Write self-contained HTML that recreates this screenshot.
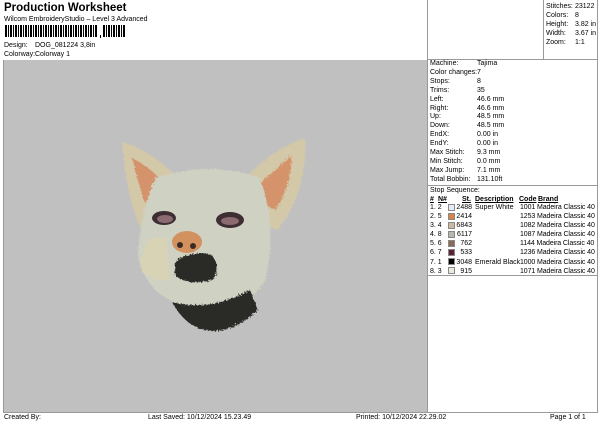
<!DOCTYPE html>
<html><head><meta charset="utf-8"><style>
*{margin:0;padding:0;box-sizing:border-box}
body{width:600px;height:424px;background:#fff;font-family:"Liberation Sans",Arial,sans-serif;font-size:7px;color:#000;position:relative;overflow:hidden}
.a{position:absolute;white-space:nowrap;line-height:9px}
.l{position:absolute;background:#999}
.u{text-decoration:underline;font-weight:bold}
.sw{position:absolute;width:7px;height:7px;border:1px solid #888}
</style></head><body>
<div class="a" style="left:4px;top:1px;font-size:11.5px;font-weight:bold;line-height:14px">Production Worksheet</div>
<div class="a" style="left:4px;top:15px">Wilcom EmbroideryStudio – Level 3 Advanced</div>
<svg style="position:absolute;left:5px;top:25px" width="125" height="13">
<g fill="#000">
<rect x="0" y="0" width="2" height="12"/><rect x="3" y="0" width="1" height="12"/><rect x="5" y="0" width="2" height="12"/><rect x="8" y="0" width="1" height="12"/><rect x="10" y="0" width="2" height="12"/><rect x="13" y="0" width="1" height="12"/><rect x="15" y="0" width="2" height="12"/><rect x="18" y="0" width="1" height="12"/><rect x="20" y="0" width="2" height="12"/><rect x="23" y="0" width="1" height="12"/><rect x="25" y="0" width="2" height="12"/><rect x="28" y="0" width="1" height="12"/><rect x="30" y="0" width="2" height="12"/><rect x="33" y="0" width="1" height="12"/><rect x="35" y="0" width="2" height="12"/><rect x="38" y="0" width="1" height="12"/><rect x="40" y="0" width="2" height="12"/><rect x="43" y="0" width="1" height="12"/><rect x="45" y="0" width="2" height="12"/><rect x="48" y="0" width="1" height="12"/><rect x="50" y="0" width="2" height="12"/><rect x="53" y="0" width="1" height="12"/><rect x="55" y="0" width="2" height="12"/><rect x="58" y="0" width="1" height="12"/><rect x="60" y="0" width="2" height="12"/><rect x="63" y="0" width="1" height="12"/><rect x="65" y="0" width="2" height="12"/><rect x="68" y="0" width="1" height="12"/><rect x="70" y="0" width="2" height="12"/><rect x="73" y="0" width="1" height="12"/><rect x="75" y="0" width="2" height="12"/><rect x="78" y="0" width="1" height="12"/><rect x="80" y="0" width="2" height="12"/><rect x="83" y="0" width="1" height="12"/><rect x="85" y="0" width="2" height="12"/><rect x="88" y="0" width="1" height="12"/><rect x="90" y="0" width="2" height="12"/>
<rect x="95" y="10" width="1" height="3"/>
<rect x="98" y="0" width="2" height="12"/><rect x="101" y="0" width="1" height="12"/><rect x="103" y="0" width="2" height="12"/><rect x="106" y="0" width="1" height="12"/><rect x="108" y="0" width="2" height="12"/><rect x="111" y="0" width="1" height="12"/><rect x="113" y="0" width="2" height="12"/><rect x="116" y="0" width="1" height="12"/><rect x="118" y="0" width="2" height="12"/>
</g></svg>
<div class="a" style="left:4px;top:41px">Design:</div><div class="a" style="left:35px;top:41px">DOG_081224 3,8in</div>
<div class="a" style="left:4px;top:50px">Colorway:</div><div class="a" style="left:35px;top:50px">Colorway 1</div>

<div style="position:absolute;left:3px;top:60px;width:424px;height:352px;background:#c0c0c0;border-left:1px solid #999"></div>
<svg style="position:absolute;left:100px;top:130px" width="220" height="210" viewBox="0 0 220 210">
<defs><filter id="f"><feTurbulence type="fractalNoise" baseFrequency="0.6" numOctaves="2" result="n"/><feDisplacementMap in="SourceGraphic" in2="n" scale="5"/></filter></defs>
<g filter="url(#f)">
<path d="M22 12 Q50 20 75 45 L80 80 L45 105 Q28 80 22 12 Z" fill="#d3c9a8"/>
<path d="M32 28 Q55 40 64 55 L58 78 L44 72 Z" fill="#d4936a"/>
<path d="M205 8 Q208 60 178 100 L140 85 L148 45 Q175 18 205 8 Z" fill="#d3c9a8"/>
<path d="M192 25 Q190 60 175 80 L160 72 L158 55 Z" fill="#d4936a"/>
<path d="M55 48 Q110 30 160 48 Q178 100 165 150 Q150 178 112 180 Q75 178 55 160 Q38 140 38 120 Q42 80 55 48 Z" fill="#cfd1c3"/>
<path d="M50 108 Q38 125 42 142 Q55 152 70 150 L66 108 Z" fill="#d9d3b6"/>
<path d="M72 172 Q110 182 150 160 L158 180 Q130 205 105 200 Q85 196 72 172 Z" fill="#2b2a28"/>
<path d="M75 132 Q90 120 112 125 Q122 140 112 150 Q90 156 75 146 Z" fill="#2c2a28"/>
</g>
<ellipse cx="64" cy="88" rx="12" ry="7" fill="#3e2e33"/>
<ellipse cx="65" cy="89" rx="8" ry="4" fill="#8b6a70"/>
<ellipse cx="130" cy="90" rx="14" ry="8" fill="#3e2e33"/>
<ellipse cx="130" cy="91" rx="9" ry="4" fill="#8b6a70"/>
<ellipse cx="87" cy="112" rx="15" ry="11" fill="#d2915f"/>
<circle cx="80" cy="115" r="3" fill="#3a2a25"/><circle cx="93" cy="116" r="3" fill="#3a2a25"/>
</svg>

<div class="l" style="left:427px;top:0;width:1px;height:412px"></div>
<div class="l" style="left:597px;top:0;width:1px;height:412px"></div>
<div class="l" style="left:543px;top:0;width:1px;height:59px"></div>
<div class="l" style="left:427px;top:59px;width:171px;height:1px"></div>
<div class="l" style="left:427px;top:185px;width:171px;height:1px"></div>
<div class="l" style="left:427px;top:275px;width:171px;height:1px"></div>

<div class="a" style="left:546px;top:2px">Stitches:<br>Colors:<br>Height:<br>Width:<br>Zoom:</div>
<div class="a" style="left:575px;top:2px">23122<br>8<br>3.82 in<br>3.67 in<br>1:1</div>

<div class="a" style="left:430px;top:60px;line-height:8.9px">Machine:<br>Color changes:<br>Stops:<br>Trims:<br>Left:<br>Right:<br>Up:<br>Down:<br>EndX:<br>EndY:<br>Max Stitch:<br>Min Stitch:<br>Max Jump:<br>Total Bobbin:</div>
<div class="a" style="left:477px;top:60px;line-height:8.9px">Tajima<br>7<br>8<br>35<br>46.6 mm<br>46.6 mm<br>48.5 mm<br>48.5 mm<br>0.00 in<br>0.00 in<br>9.3 mm<br>0.0 mm<br>7.1 mm<br>131.10ft</div>

<div class="a" style="left:430px;top:186px">Stop Sequence:</div>
<div class="a u" style="left:430px;top:195px">#</div>
<div class="a u" style="left:438px;top:195px">N#</div>
<div class="a u" style="left:462px;top:195px">St.</div>
<div class="a u" style="left:475px;top:195px">Description</div>
<div class="a u" style="left:519px;top:195px">Code</div>
<div class="a u" style="left:538px;top:195px">Brand</div>

<div class="a" style="left:430px;top:203px;line-height:9.1px">1. 2<br>2. 5<br>3. 4<br>4. 8<br>5. 6<br>6. 7<br>7. 1<br>8. 3</div>
<div class="sw" style="left:448px;top:204px;background:#e6ecf4"></div>
<div class="sw" style="left:448px;top:213px;background:#d8834a"></div>
<div class="sw" style="left:448px;top:222px;background:#cdb9a0"></div>
<div class="sw" style="left:448px;top:231px;background:#b8b6ae"></div>
<div class="sw" style="left:448px;top:240px;background:#8a6b5a"></div>
<div class="sw" style="left:448px;top:249px;background:#5a2038"></div>
<div class="sw" style="left:448px;top:258px;background:#000"></div>
<div class="sw" style="left:448px;top:267px;background:#ece8dc"></div>
<div class="a" style="left:456px;top:203px;width:16px;text-align:right;line-height:9.1px">2488<br>2414<br>6843<br>6117<br>762<br>533<br>3048<br>915</div>
<div class="a" style="left:475px;top:203px;line-height:9.1px">Super White<br><br><br><br><br><br>Emerald Black<br></div>
<div class="a" style="left:520px;top:203px;line-height:9.1px;letter-spacing:-0.1px">1001 Madeira Classic 40<br>1253 Madeira Classic 40<br>1082 Madeira Classic 40<br>1087 Madeira Classic 40<br>1144 Madeira Classic 40<br>1236 Madeira Classic 40<br>1000 Madeira Classic 40<br>1071 Madeira Classic 40</div>

<div class="l" style="left:3px;top:412px;width:595px;height:1px"></div>
<div class="a" style="left:4px;top:413px">Created By:</div>
<div class="a" style="left:148px;top:413px">Last Saved: 10/12/2024 15.23.49</div>
<div class="a" style="left:356px;top:413px">Printed: 10/12/2024 22.29.02</div>
<div class="a" style="left:550px;top:413px">Page 1 of 1</div>
</body></html>
